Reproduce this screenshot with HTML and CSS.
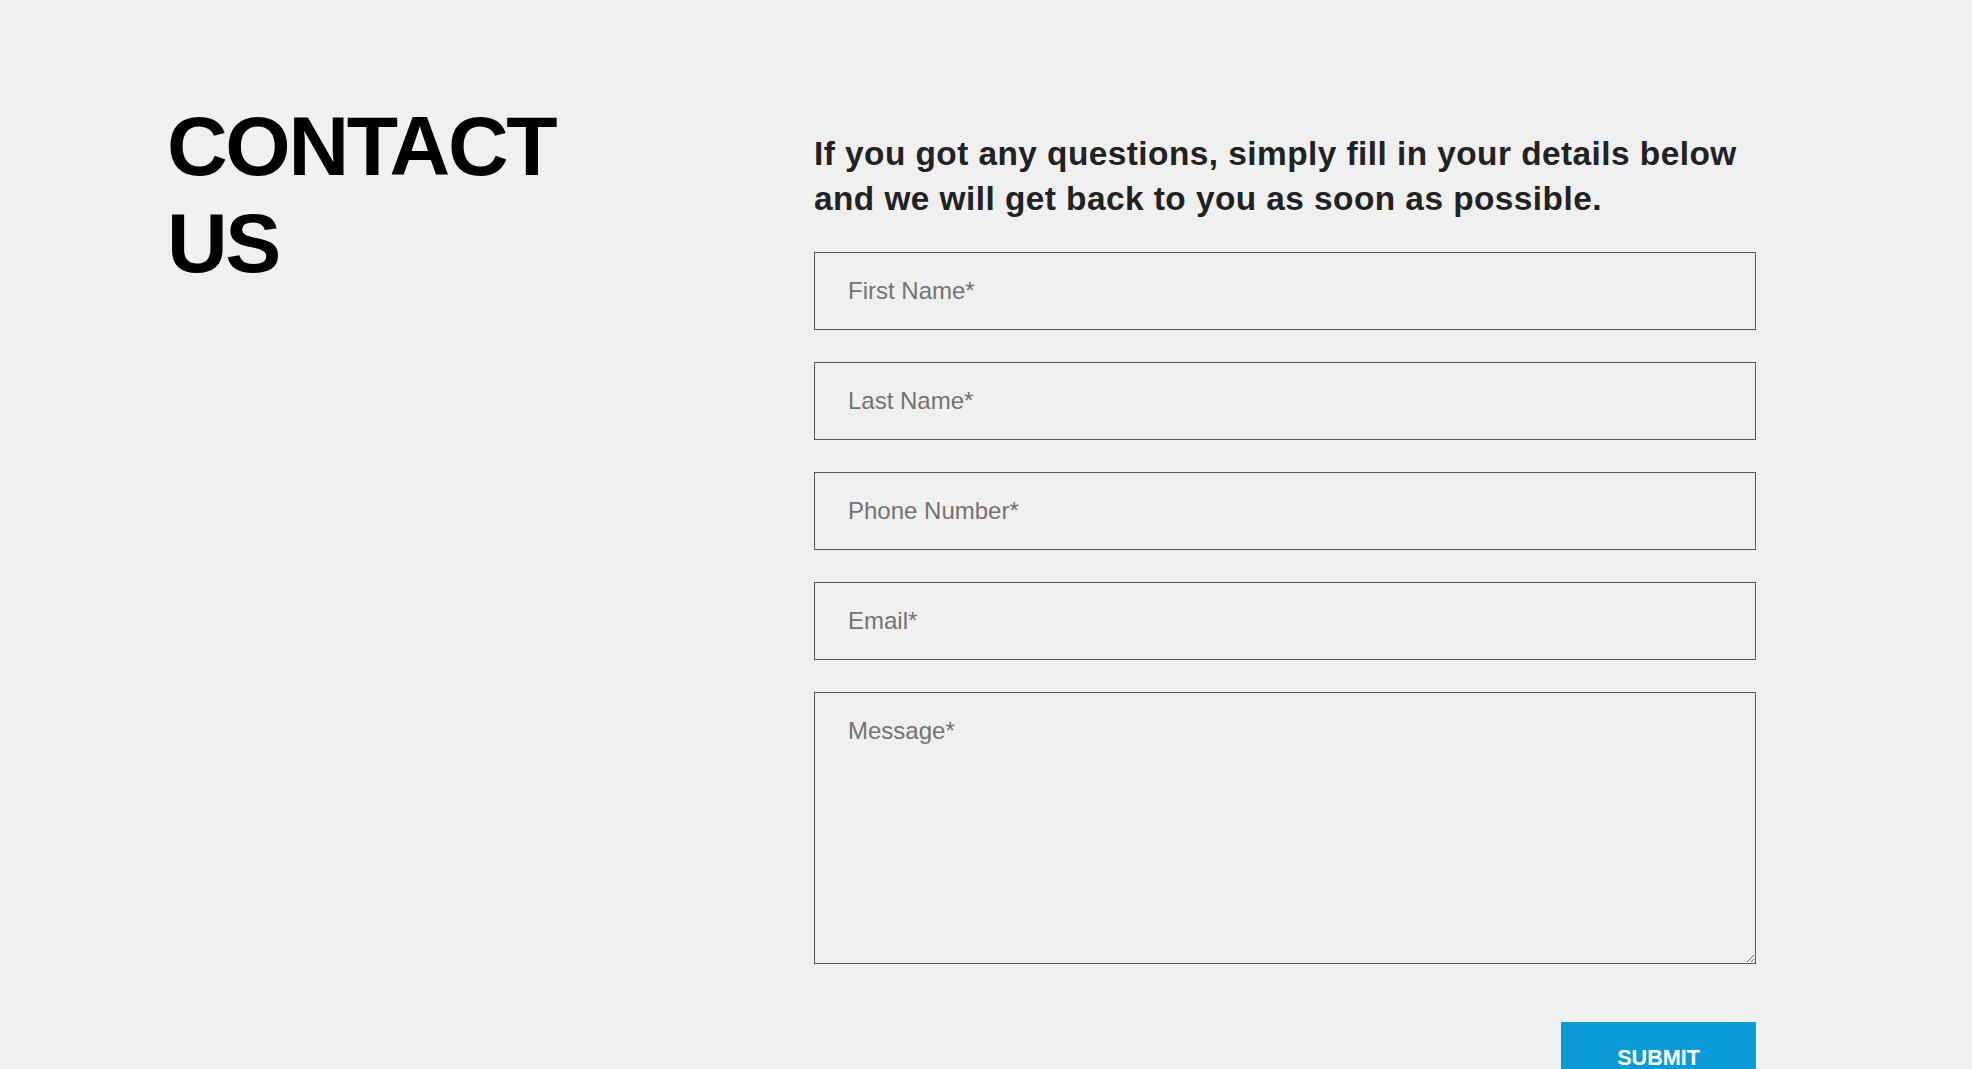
FILE: index.html
```html
<html>
<head>
  <meta charset="UTF-8">
  <title>Contact Us</title>
  <meta name="viewport" content="width=device-width, initial-scale=1">
  <link rel="stylesheet" href="styles.css">
</head>
<body>
  <div class="wrapper">
    <div class="contact">
      <div class="contact-title">
        <h1>CONTACT<br>US</h1>
      </div>
      <div class="contact-body">
        <p class="intro">If you got any questions, simply fill in your details below and we will get back to you as soon as possible.</p>
        <form class="form" onsubmit="return false">
          <input class="field" type="text" placeholder="First Name*">
          <input class="field" type="text" placeholder="Last Name*">
          <input class="field" type="tel" placeholder="Phone Number*">
          <input class="field" type="email" placeholder="Email*">
          <textarea class="field message" placeholder="Message*"></textarea>
          <button class="submit" type="submit">SUBMIT</button>
        </form>
      </div>
    </div>
  </div>
</body>
</html>
```

FILE: styles.css
```css
html, body {
  margin: 0;
  padding: 0;
  background: #f0f0f0;
  font-family: "Liberation Sans", Arial, sans-serif;
}

.wrapper {
  height: 100%;
  overflow: hidden;
}

.contact {
  display: flex;
  padding: 98px 0 0 167px;
}

.contact-title {
  width: 647px;
  flex-shrink: 0;
}

.contact-title h1 {
  margin: 0;
  font-size: 84px;
  line-height: 97px;
  font-weight: bold;
  letter-spacing: -2.3px;
  color: #000;
}

.contact-body {
  width: 942px;
  padding-top: 33px;
}

.intro {
  margin: 0 0 31px;
  font-size: 33.4px;
  line-height: 45px;
  font-weight: bold;
  letter-spacing: 0.45px;
  color: #222;
}

.form {
  display: flex;
  flex-direction: column;
  gap: 32px;
}

.field {
  box-sizing: border-box;
  width: 100%;
  height: 78px;
  margin: 0;
  padding: 0 33px;
  border: 1px solid #595959;
  border-radius: 0;
  background: transparent;
  font-family: inherit;
  font-size: 24px;
  color: #333;
  outline: none;
}

.field::placeholder {
  color: #737373;
}

.message {
  height: 272px;
  padding: 24px 33px;
  resize: vertical;
}

.submit {
  align-self: flex-end;
  margin-top: 26px;
  height: 72px;
  padding: 0 56px;
  border: 0;
  background: #0b9ad8;
  color: #fff;
  font-family: inherit;
  font-size: 21.6px;
  font-weight: bold;
  cursor: pointer;
}
```
